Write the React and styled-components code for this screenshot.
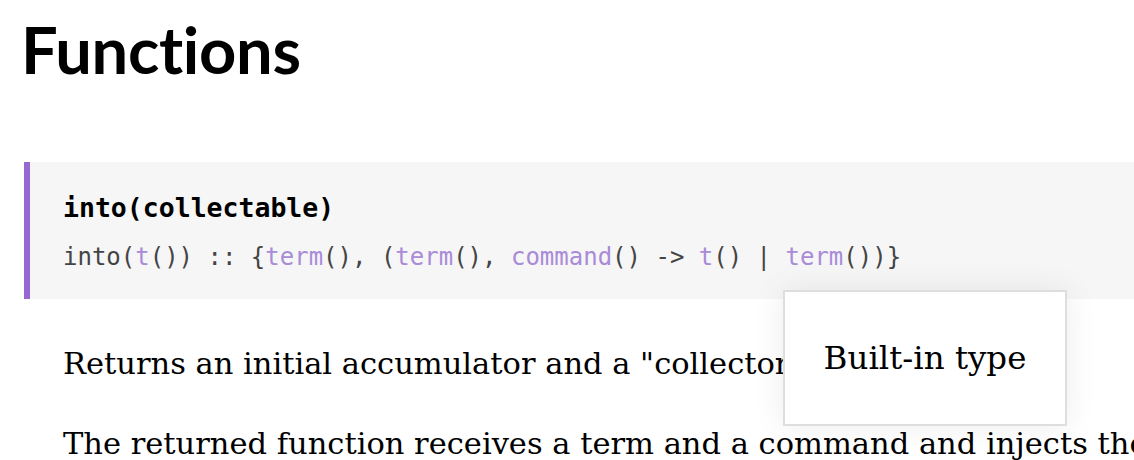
import styled, { createGlobalStyle } from "styled-components";

const GlobalStyle = createGlobalStyle`
  html, body {
    margin: 0;
    padding: 0;
    background: #fff;
    overflow: hidden;
  }
  body {
    width: 1134px;
    height: 460px;
  }
`;

const Page = styled.main`
  width: 1600px;
  padding: 0 0 0 24px;
  color: #000;
`;

const Title = styled.h1`
  margin: 0 0 0 -3px;
  padding: 11px 0 0;
  font-family: Lato, "Open Sans", sans-serif;
  font-weight: 700;
  font-size: 65px;
  line-height: 76px;
  letter-spacing: -0.3px;
`;

const Detail = styled.section`
  margin-top: 75px;
  position: relative;
`;

const Header = styled.div`
  background: #f6f6f6;
  border-left: 6px solid #9768d1;
  padding: 29px 0 25px 33px;
  font-family: "DejaVu Sans Mono", "Liberation Mono", monospace;
`;

const Signature = styled.div`
  font-weight: 700;
  font-size: 26.5px;
  line-height: 34px;
  color: #000;
`;

const Spec = styled.div`
  margin-top: 15px;
  font-size: 24px;
  line-height: 34px;
  color: #444;
`;

const Type = styled.span`
  color: #a98bd8;
`;

const Docs = styled.div`
  padding: 41px 0 0 39px;
  font-family: "DejaVu Serif", "Liberation Serif", serif;
  font-size: 30.5px;
  line-height: 48px;
  color: #000;

  p {
    margin: 0 0 32px;
  }
`;

const Tooltip = styled.div`
  position: absolute;
  left: 759px;
  top: 128px;
  width: 280px;
  height: 132px;
  display: flex;
  align-items: center;
  justify-content: center;
  background: #fff;
  border: 2px solid #dedede;
  box-shadow: 0 0 30px rgba(0, 0, 0, 0.08);
  font-family: "DejaVu Serif", "Liberation Serif", serif;
  font-size: 32.5px;
  color: #000;
`;

export default function App() {
  return (
    <>
      <GlobalStyle />
      <Page>
        <Title>Functions</Title>
        <Detail>
          <Header>
            <Signature>into(collectable)</Signature>
            <Spec>
              into(<Type>t</Type>()) :: {"{"}
              <Type>term</Type>(), (<Type>term</Type>(), <Type>command</Type>() -&gt;{" "}
              <Type>t</Type>() | <Type>term</Type>()){"}"}
            </Spec>
          </Header>
          <Docs>
            <p>Returns an initial accumulator and a "collector" function.</p>
            <p>The returned function receives a term and a command and injects the term into the collectable.</p>
          </Docs>
          <Tooltip>Built-in type</Tooltip>
        </Detail>
      </Page>
    </>
  );
}
